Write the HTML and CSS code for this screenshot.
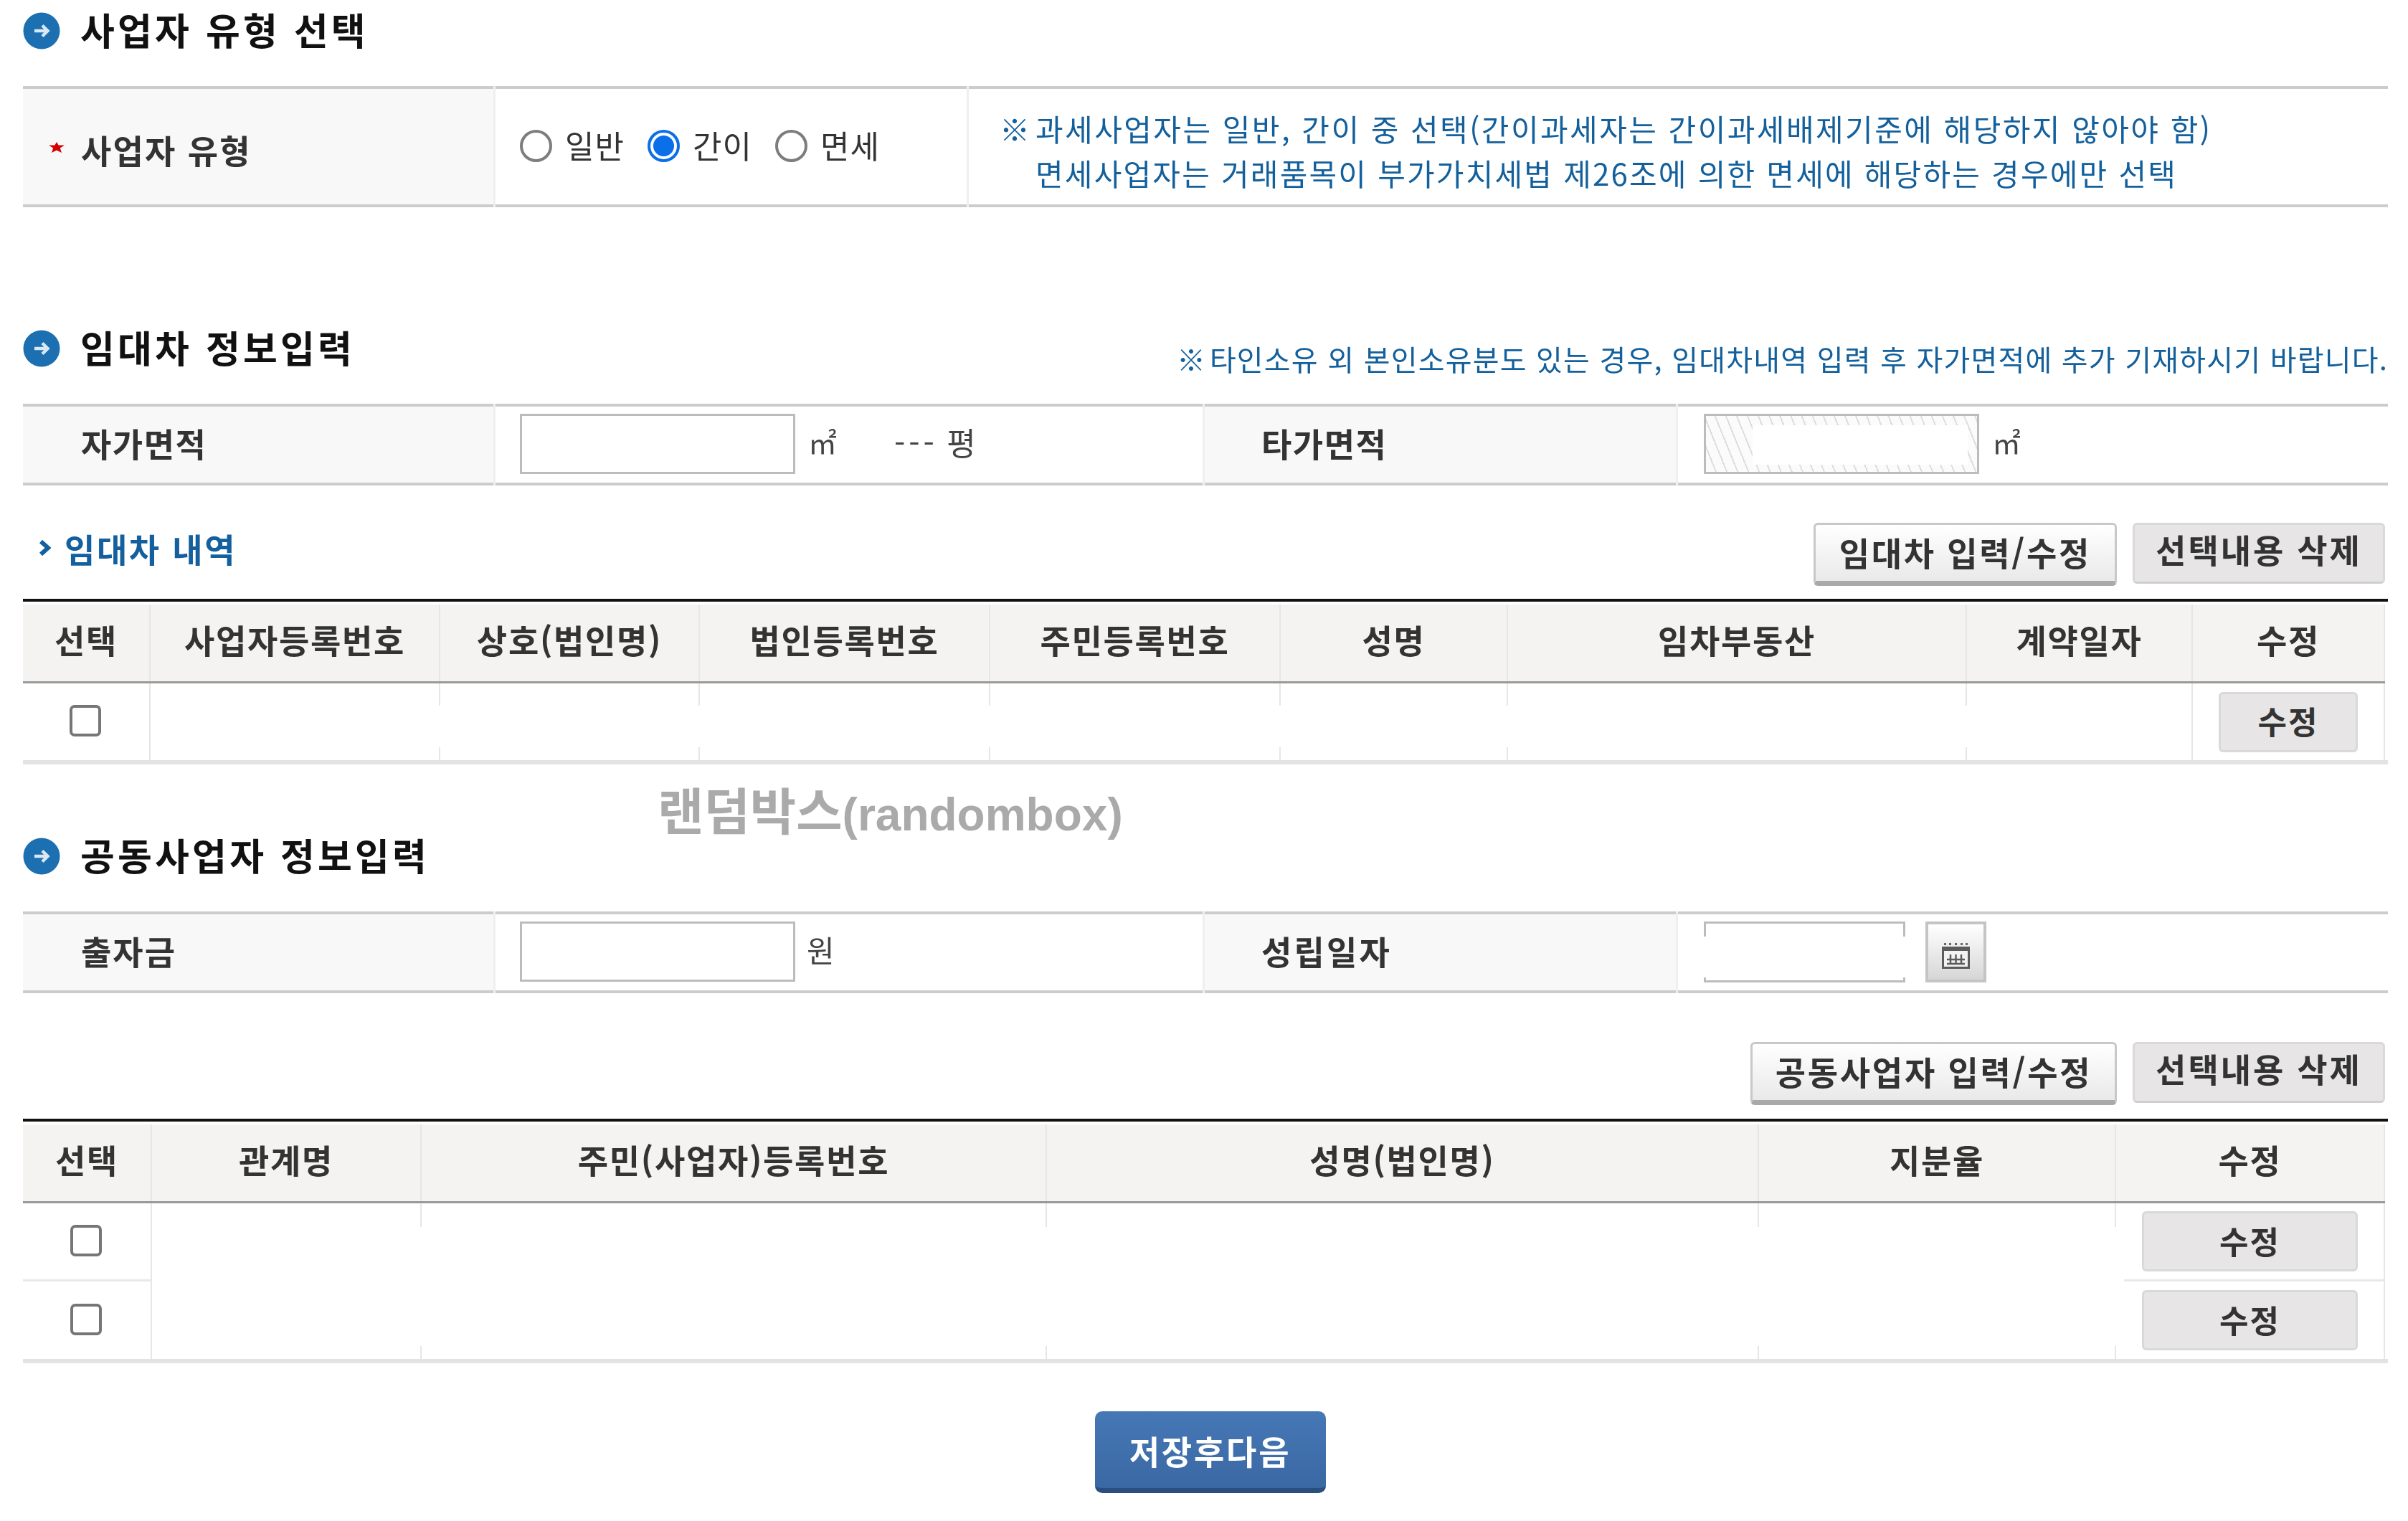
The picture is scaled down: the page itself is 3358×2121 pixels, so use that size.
FILE: index.html
```html
<!DOCTYPE html>
<html lang="ko">
<head>
<meta charset="utf-8">
<title>사업자 유형 선택</title>
<link rel="stylesheet" href="styles.css">
</head>
<body>
<main class="page">
  <h2 class="heading h-first">
    <svg class="bullet" viewBox="0 0 52 52"><circle cx="26" cy="26" r="25.5" fill="#1c6fb0"/><path d="M16 26h18M27 18.5l7.5 7.5-7.5 7.5" fill="none" stroke="#d9e8f4" stroke-width="4.5"/></svg>
    <span class="ht ht1">사업자 유형 선택</span>
  </h2>

  <div class="frow frow-type">
    <div class="fcell label label-type"><svg class="req" viewBox="0 0 22 15"><path d="M11 0l2.6 4.6H22l-6.2 3.8L18 15l-7-3.6L4 15l2.2-6.6L0 4.6h8.4z" fill="#d40000"/></svg><span class="ls">사업자 유형</span></div>
    <div class="fcell radios">
      <label class="radio"><input type="radio" name="t"><span>일반</span></label>
      <label class="radio"><input type="radio" name="t" checked><span>간이</span></label>
      <label class="radio"><input type="radio" name="t"><span>면세</span></label>
    </div>
    <div class="fcell notes">
      <div class="note"><span class="mark">※</span>과세사업자는 일반, 간이 중 선택(간이과세자는 간이과세배제기준에 해당하지 않아야 함)</div>
      <div class="note note2">면세사업자는 거래품목이 부가가치세법 제26조에 의한 면세에 해당하는 경우에만 선택</div>
    </div>
  </div>

  <div class="heading-row hr2">
    <h2 class="heading">
      <svg class="bullet" viewBox="0 0 52 52"><circle cx="26" cy="26" r="25.5" fill="#1c6fb0"/><path d="M16 26h18M27 18.5l7.5 7.5-7.5 7.5" fill="none" stroke="#d9e8f4" stroke-width="4.5"/></svg>
      <span class="ht">임대차 정보입력</span>
    </h2>
    <div class="note note-right"><span class="mark">※</span>타인소유 외 본인소유분도 있는 경우, 임대차내역 입력 후 자가면적에 추가 기재하시기 바랍니다.</div>
  </div>

  <div class="frow frow-area">
    <div class="fcell label"><span class="ls">자가면적</span></div>
    <div class="fcell value"><input class="txt" type="text"><span class="unit">㎡</span><span class="unit pyeong"><span class="dash">---</span> 평</span></div>
    <div class="fcell label label2"><span class="ls">타가면적</span></div>
    <div class="fcell value value2"><span class="txt disabled"><span class="disabled-mask"></span></span><span class="unit">㎡</span></div>
  </div>

  <div class="bar bar1">
    <h3 class="sub"><svg class="chev" viewBox="0 0 18 22"><path d="M3 2l10 9-10 9" fill="none" stroke="#14609e" stroke-width="6"/></svg>임대차 내역</h3>
    <div class="btns">
      <button class="btn btn-main" type="button">임대차 입력/수정</button>
      <button class="btn btn-plain" type="button">선택내용 삭제</button>
    </div>
  </div>

  <div class="dt">
    <div class="dt-head cols1">
      <div class="c">선택</div><div class="c">사업자등록번호</div><div class="c">상호(법인명)</div><div class="c">법인등록번호</div><div class="c">주민등록번호</div><div class="c">성명</div><div class="c">임차부동산</div><div class="c">계약일자</div><div class="c">수정</div>
    </div>
    <div class="dt-body">
      <div class="dt-row cols1">
        <div class="c"><span class="check"></span></div><div class="c"></div><div class="c"></div><div class="c"></div><div class="c"></div><div class="c"></div><div class="c"></div><div class="c"></div><div class="c"><button class="btn btn-edit be1" type="button">수정</button></div>
      </div>
      <div class="mask mask1"></div>
    </div>
  </div>

  <div class="wm"><span class="wm-ko">랜덤박스</span>(randombox)</div>

  <h2 class="heading h3">
    <svg class="bullet" viewBox="0 0 52 52"><circle cx="26" cy="26" r="25.5" fill="#1c6fb0"/><path d="M16 26h18M27 18.5l7.5 7.5-7.5 7.5" fill="none" stroke="#d9e8f4" stroke-width="4.5"/></svg>
    <span class="ht">공동사업자 정보입력</span>
  </h2>

  <div class="frow frow-area frow-joint">
    <div class="fcell label"><span class="ls ls-wide">출자금</span></div>
    <div class="fcell value"><input class="txt" type="text"><span class="unit won">원</span></div>
    <div class="fcell label label3"><span class="ls">성립일자</span></div>
    <div class="fcell value value3">
      <span class="date"><span class="date-mask"></span></span>
      <button class="cal" type="button" aria-label="달력">
        <svg viewBox="0 0 39 36" class="cal-i"><g fill="#666"><rect x="3" y="0" width="3" height="3"/><rect x="10" y="0" width="3" height="3"/><rect x="18" y="0" width="3" height="3"/><rect x="26" y="0" width="3" height="3"/><rect x="33" y="0" width="3" height="3"/></g><rect x="1.5" y="6.5" width="36" height="28" fill="#f2f2f2" stroke="#5c5c5c" stroke-width="3"/><rect x="1" y="6" width="37" height="5" fill="#5c5c5c"/><path d="M7 23h25M7 29h25M12 16v12M19.5 16v12M27 16v12" stroke="#5c5c5c" stroke-width="2.5" fill="none"/></svg>
      </button>
    </div>
  </div>

  <div class="bar bar2">
    <div class="btns">
      <button class="btn btn-main" type="button">공동사업자 입력/수정</button>
      <button class="btn btn-plain" type="button">선택내용 삭제</button>
    </div>
  </div>

  <div class="dt">
    <div class="dt-head cols2 head2">
      <div class="c">선택</div><div class="c">관계명</div><div class="c">주민(사업자)등록번호</div><div class="c">성명(법인명)</div><div class="c">지분율</div><div class="c">수정</div>
    </div>
    <div class="dt-body">
      <div class="dt-row cols2 row-a">
        <div class="c"><span class="check"></span></div><div class="c"></div><div class="c"></div><div class="c"></div><div class="c"></div><div class="c"><button class="btn btn-edit" type="button">수정</button></div>
      </div>
      <div class="dt-row cols2 row-b">
        <div class="c"><span class="check"></span></div><div class="c"></div><div class="c"></div><div class="c"></div><div class="c"></div><div class="c"><button class="btn btn-edit" type="button">수정</button></div>
      </div>
      <div class="mask mask2"></div>
    </div>
  </div>

  <div class="save-wrap"><button class="btn-save" type="button">저장후다음</button></div>
</main>
</body>
</html>
```
FILE: styles.css
```css
* { box-sizing: border-box; }
html, body { margin: 0; padding: 0; background: #fff; }
body { font-family: "Noto Sans CJK KR", "Noto Sans", sans-serif; color: #333; }
.page { position: relative; width: 3358px; height: 2121px; padding: 0 28px 0 32px; overflow: hidden; filter: blur(0.6px); }
button { font-family: inherit; margin: 0; padding: 0; cursor: pointer; }

.heading { display: flex; align-items: center; gap: 28px; margin: 0; height: 52px; font-size: 52px; font-weight: 700; color: #111; line-height: 52px; }
.bullet { width: 52px; height: 52px; flex: none; }
.ht { letter-spacing: 4.2px; white-space: nowrap; padding-bottom: 5px; }
.h-first { margin-top: 17px; }

.frow { display: grid; column-gap: 3px; background: #efefef; }
.frow-type { grid-template-columns: 656px 657px 1979px; height: 169px; margin-top: 51px; }
.frow-area { grid-template-columns: 656px 986px 657px 990px; height: 114px; }
.fcell { display: flex; align-items: center; background: #fff; border-top: 4px solid #ccc; border-bottom: 4px solid #ccc; }
.label { background: #f8f8f8; padding-left: 81px; padding-bottom: 7px; font-size: 46px; font-weight: 700; color: #333; }
.label2, .label3 { padding-left: 79px; }
.label3 .ls { letter-spacing: 3.2px; }
.ls { letter-spacing: 1.5px; white-space: nowrap; }
.ls-wide { letter-spacing: 2px; }
.label-type { padding-left: 36px; padding-bottom: 0; padding-top: 6px; gap: 23px; }
.label-type .ls { letter-spacing: 2.2px; }
.req { width: 22px; height: 15px; flex: none; margin-bottom: 4px; }

.radios { padding-left: 34px; gap: 32px; font-size: 44px; color: #333; padding-bottom: 3px; }
.radio { display: flex; align-items: center; gap: 18px; letter-spacing: 1px; }
.radio span { margin-top: -2px; }
.radio input { appearance: none; width: 45px; height: 45px; margin: 0; border: 4px solid #7d7d7d; border-radius: 50%; background: #fff; }
.radio input:checked { border-color: #0a6fe8; background: radial-gradient(circle, #0a6fe8 0 14px, #fff 15px); }

.notes { flex-direction: column; align-items: flex-start; justify-content: center; padding-left: 43px; gap: 21px; padding-top: 10px; }
.note { font-size: 42px; line-height: 41px; color: #13609c; white-space: nowrap; letter-spacing: 2.45px; }
.mark { display: inline-block; width: 46px; letter-spacing: 0; }
.notes .mark { width: 50px; }
.note2 { padding-left: 50px; letter-spacing: 2.2px; }

.heading-row { display: flex; align-items: flex-start; justify-content: space-between; height: 103px; margin-top: 171px; }
.note-right { margin-top: 20px; font-size: 40px; letter-spacing: 1.2px; }

.value { padding-left: 34px; font-size: 42px; color: #444; }
.txt { display: block; width: 384px; height: 84px; border: 3px solid #bcbcbc; background: #fff; margin: 0 0 2px; padding: 0; }
.unit { margin-left: 18px; font-size: 40px; margin-bottom: 8px; }
.pyeong { margin-left: 80px; font-size: 44px; }
.dash { letter-spacing: 5px; }
.won { margin-left: 16px; font-size: 42px; margin-bottom: 10px; }
.value2 { padding-left: 36px; }
.disabled { position: relative; background: repeating-linear-gradient(68deg, #fbfbfb 0 12px, #dedede 12px 14px); }
.disabled-mask { position: absolute; left: 65px; top: 13px; right: 13px; bottom: 10px; background: #fff; }

.bar { display: flex; align-items: flex-start; justify-content: space-between; padding-right: 4px; }
.bar1 { height: 158px; padding-top: 52px; }
.bar2 { height: 175px; padding-top: 68px; justify-content: flex-end; }
.sub { display: flex; align-items: center; gap: 18px; margin: 12px 0 0 22px; font-size: 46px; font-weight: 700; color: #14609e; line-height: 46px; letter-spacing: 2.6px; }
.chev { width: 18px; height: 22px; }
.btns { display: flex; gap: 22px; align-items: flex-start; }
.btn { display: block; font-weight: 700; font-size: 46px; color: #333; letter-spacing: 2.7px; white-space: nowrap; border-radius: 6px; }
.btn-main { height: 88px; padding: 0 33px 4px; background: linear-gradient(#fff, #e9e9e9); border: 3px solid #c8c8c8; border-bottom: 7px solid #a9a9a9; }
.btn-plain { height: 85px; width: 352px; padding-bottom: 14px; letter-spacing: 3px; background: #e7e5e5; border: 3px solid #d9d9d9; border-bottom-color: #cfcfcf; }
.bar2 .btn-main { width: 511px; padding: 0 0 4px; }

.dt { border-top: 4px solid #111; border-bottom: 6px solid #e3e3e3; padding: 4px 4px 0 0; }
.cols1 { display: grid; grid-template-columns: 178px 404px 362px 405px 405px 317px 640px 315px 268px; }
.cols2 { display: grid; grid-template-columns: 180px 376px 872px 993px 498px 375px; }
.c { display: flex; align-items: center; justify-content: center; border-right: 2px solid #e6e6e6; }
.dt-head { height: 110px; background: #f4f3f1; border-bottom: 3px solid #999; font-size: 46px; font-weight: 700; color: #333; letter-spacing: 1.7px; }
.dt-head .c { padding-bottom: 12px; }
.head2 { height: 110px; }
.dt-body { position: relative; }
.dt-row { height: 107px; }
.row-a { height: 109px; }
.row-a .c:first-child, .row-a .c:last-child { border-bottom: 3px solid #e8e8e8; }
.row-b { height: 108px; }
.check { display: block; width: 44px; height: 44px; margin: 0 2px 3px 0; border: 4px solid #767676; border-radius: 7px; background: #fff; }
.mask { position: absolute; background: #fff; }
.mask1 { left: 178px; top: 31px; width: 2846px; height: 58px; }
.mask2 { left: 220px; top: 33px; width: 2710px; height: 166px; }
.btn-edit { width: 301px; height: 84px; padding-bottom: 3px; background: #e7e5e5; border: 3px solid #d9d9d9; font-size: 44px; letter-spacing: 2px; }
.be1 { width: 194px; }

.wm { position: absolute; left: 917px; top: 1088px; font: 700 64px/80px "Liberation Sans", "Noto Sans CJK KR", sans-serif; color: #aaa; white-space: nowrap; }
.wm-ko { font-family: "Noto Sans CJK KR", sans-serif; font-size: 70px; }
.h3 { margin-top: 102px; }
.frow-joint { margin-top: 51px; }
.value3 { padding-left: 36px; gap: 28px; }
.date { position: relative; display: block; width: 281px; height: 85px; margin-bottom: 2px; border: 3px solid #bcbcbc; }
.date-mask { position: absolute; left: -4px; right: -4px; top: 18px; bottom: 4px; background: #fff; }
.cal { width: 85px; height: 85px; margin-bottom: 2px; border: 4px solid #c4c4c4; background: linear-gradient(#fff, #d6d6d6); display: flex; align-items: center; justify-content: center; padding-top: 12px; }
.cal-i { width: 39px; height: 36px; }

.save-wrap { display: flex; justify-content: center; margin-top: 67px; padding-left: 13px; }
.btn-save { width: 322px; height: 114px; border: 0; border-bottom: 7px solid #2a4e7e; border-radius: 10px; background: linear-gradient(#4678b6, #3a68a3); color: #fff; font-size: 46px; font-weight: 700; letter-spacing: 2.8px; }
```
